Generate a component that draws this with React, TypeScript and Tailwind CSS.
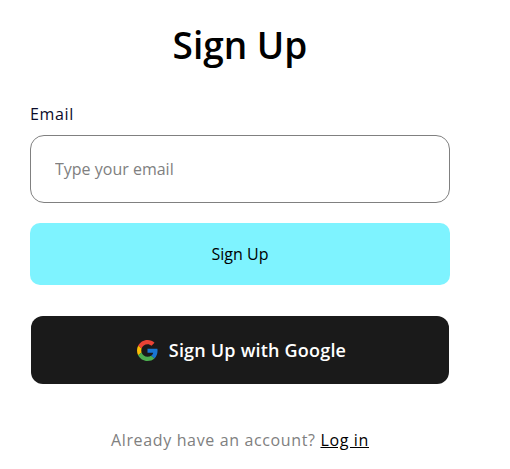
export default function App() {
  return (
    <div className="min-h-[469px] bg-white font-['Open_Sans',sans-serif] overflow-hidden">
      <div className="w-[420px] ml-[30px] flex flex-col">
        <h1 className="mt-[20px] text-center text-[37px] leading-[49px] font-semibold text-black">Sign Up</h1>
        <label className="mt-[34px] text-[16px] leading-[22px] tracking-[0.64px] text-[#0b0b2a]">Email</label>
        <input
          placeholder="Type your email"
          className="mt-[10px] h-[68px] w-full rounded-[14px] border border-[#808080] px-[24px] text-[16px] outline-none placeholder:text-[#808080]"
        />
        <button className="mt-[20px] h-[62px] w-full rounded-[10px] bg-[#7ef3ff] text-[16px] text-black">Sign Up</button>
        <button className="mt-[31px] mx-[1px] h-[68px] pl-[3px] rounded-[12px] bg-[#1a1a1a] flex items-center justify-center gap-[11px] text-[18px] font-semibold tracking-[0.2px] text-white">
          <svg width="21" height="21" viewBox="0 0 48 48">
            <path fill="#EA4335" d="M24 9.5c3.54 0 6.71 1.22 9.21 3.6l6.85-6.85C35.9 2.38 30.47 0 24 0 14.62 0 6.51 5.38 2.56 13.22l7.98 6.19C12.43 13.72 17.74 9.5 24 9.5z" />
            <path fill="#1976D2" d="M46.98 24.55c0-1.57-.15-3.09-.38-4.55H24v9.02h12.94c-.58 2.96-2.26 5.48-4.78 7.18l7.73 6c4.51-4.18 7.09-10.36 7.09-17.65z" />
            <path fill="#FBBC05" d="M10.53 28.59c-.48-1.45-.76-2.99-.76-4.59s.27-3.14.76-4.59l-7.98-6.19C.92 16.46 0 20.12 0 24c0 3.88.92 7.54 2.56 10.78l7.97-6.19z" />
            <path fill="#4CAF50" d="M24 48c6.48 0 11.93-2.13 15.89-5.81l-7.73-6c-2.15 1.45-4.92 2.3-8.16 2.3-6.26 0-11.57-4.22-13.47-9.91l-7.98 6.19C6.51 42.62 14.62 48 24 48z" />
          </svg>
          <span>Sign Up with Google</span>
        </button>
        <p className="mt-[45px] text-center text-[16px] leading-[22px] tracking-[0.64px] text-[#808080]">
          Already have an account? <a className="text-black underline">Log in</a>
        </p>
      </div>
    </div>
  );
}
